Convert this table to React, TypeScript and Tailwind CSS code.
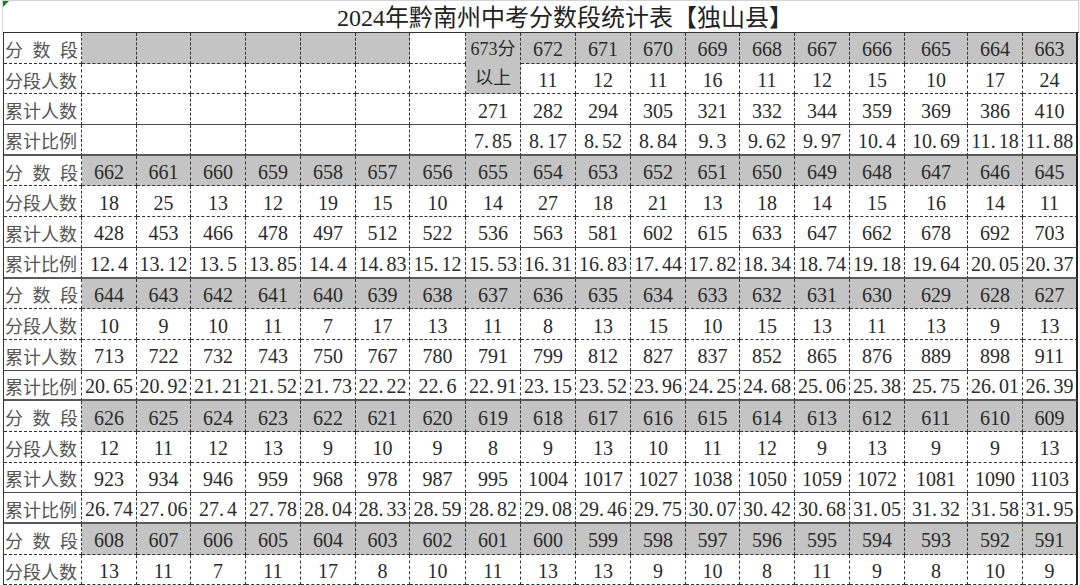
const labels = ['分 数 段', '分段人数', '累计人数', '累计比例'];

type Spec = { t?: string; gray?: boolean; span2?: boolean; skip?: boolean };
type Row = { kind: number; cells: Spec[] };

const split = (s: string) => s.split(' ');

const blocks = [
  {
    scores: split('662 661 660 659 658 657 656 655 654 653 652 651 650 649 648 647 646 645'),
    counts: split('18 25 13 12 19 15 10 14 27 18 21 13 18 14 15 16 14 11'),
    cums: split('428 453 466 478 497 512 522 536 563 581 602 615 633 647 662 678 692 703'),
    ratios: split('12.4 13.12 13.5 13.85 14.4 14.83 15.12 15.53 16.31 16.83 17.44 17.82 18.34 18.74 19.18 19.64 20.05 20.37'),
  },
  {
    scores: split('644 643 642 641 640 639 638 637 636 635 634 633 632 631 630 629 628 627'),
    counts: split('10 9 10 11 7 17 13 11 8 13 15 10 15 13 11 13 9 13'),
    cums: split('713 722 732 743 750 767 780 791 799 812 827 837 852 865 876 889 898 911'),
    ratios: split('20.65 20.92 21.21 21.52 21.73 22.22 22.6 22.91 23.15 23.52 23.96 24.25 24.68 25.06 25.38 25.75 26.01 26.39'),
  },
  {
    scores: split('626 625 624 623 622 621 620 619 618 617 616 615 614 613 612 611 610 609'),
    counts: split('12 11 12 13 9 10 9 8 9 13 10 11 12 9 13 9 9 13'),
    cums: split('923 934 946 959 968 978 987 995 1004 1017 1027 1038 1050 1059 1072 1081 1090 1103'),
    ratios: split('26.74 27.06 27.4 27.78 28.04 28.33 28.59 28.82 29.08 29.46 29.75 30.07 30.42 30.68 31.05 31.32 31.58 31.95'),
  },
];

const empty = (n: number, gray = false): Spec[] => Array.from({ length: n }, () => ({ gray }));

const rows: Row[] = [
  {
    kind: 0,
    cells: [
      ...empty(6, true),
      ...empty(1),
      { t: '673分\n以上', gray: true, span2: true },
      ...split('672 671 670 669 668 667 666 665 664 663').map((t) => ({ t, gray: true })),
    ],
  },
  {
    kind: 1,
    cells: [...empty(7), { skip: true }, ...split('11 12 11 16 11 12 15 10 17 24').map((t) => ({ t }))],
  },
  {
    kind: 2,
    cells: [...empty(7), ...split('271 282 294 305 321 332 344 359 369 386 410').map((t) => ({ t }))],
  },
  {
    kind: 3,
    cells: [...empty(7), ...split('7.85 8.17 8.52 8.84 9.3 9.62 9.97 10.4 10.69 11.18 11.88').map((t) => ({ t }))],
  },
];

blocks.forEach((b) => {
  rows.push({ kind: 0, cells: b.scores.map((t) => ({ t, gray: true })) });
  rows.push({ kind: 1, cells: b.counts.map((t) => ({ t })) });
  rows.push({ kind: 2, cells: b.cums.map((t) => ({ t })) });
  rows.push({ kind: 3, cells: b.ratios.map((t) => ({ t })) });
});

rows.push({ kind: 0, cells: split('608 607 606 605 604 603 602 601 600 599 598 597 596 595 594 593 592 591').map((t) => ({ t, gray: true })) });
rows.push({ kind: 1, cells: split('13 11 7 11 17 8 10 11 13 13 9 10 8 11 9 8 10 9').map((t) => ({ t })) });

function bottom(kind: number) {
  if (kind === 2) return 'border-b [border-bottom-style:solid] border-b-[#4a4a4a]';
  if (kind === 3) return 'border-b-2 [border-bottom-style:solid] border-b-[#5a5a5a]';
  return 'border-b [border-bottom-style:dashed] border-b-[#333]';
}

function right(last: boolean) {
  return last
    ? 'border-r-2 [border-right-style:solid] border-r-[#222]'
    : 'border-r [border-right-style:dashed] border-r-[#333]';
}

// the sheet's font gives the decimal point a wide slot
function Num({ t }: { t?: string }) {
  if (!t || !t.includes('.')) return <>{t}</>;
  const [a, b] = t.split('.');
  return (
    <>
      {a}
      <span className="pr-[3px]">.</span>
      {b}
    </>
  );
}

export default function App() {
  return (
    <div className="w-[1080px] h-[585px] overflow-hidden bg-[#f2f2f2] font-['Liberation_Serif','Noto_Sans_CJK_SC',serif] text-[#2b2b2b]">
      <div className="w-[1079px] h-full bg-white">
        <div className="relative ml-[2px] w-[1077px] h-[32px] border-t border-x border-[#d2d2d2] flex items-center pl-[334px] pt-[2px] text-[24px] text-[#222]">
          <span className="absolute left-0 top-0 w-0 h-0 border-t-[6px] border-r-[6px] border-t-[#1f7a2a] border-r-transparent" />
          2024年黔南州中考分数段统计表【独山县】
        </div>
        <div className="ml-[3px] w-[1076px] border-t border-l border-[#333] grid grid-cols-[78px_55px_54px_55px_55px_55px_54px_56px_55px_55px_55px_55px_54px_55px_55px_55px_63px_55px_55px] auto-rows-[30.7px]">
          {rows.map((r, ri) => [
            <div
              key={`l${ri}`}
              className={`${bottom(r.kind)} ${right(false)} flex items-center pt-[3px] pl-[1px] pr-[3px] text-[18px] text-[#555] font-['Noto_Sans_CJK_SC',sans-serif] ${
                r.kind === 0 ? 'justify-between' : 'justify-start'
              }`}
            >
              {labels[r.kind].split(r.kind === 0 ? ' ' : '').map((ch, i) => (
                <span key={i}>{ch}</span>
              ))}
            </div>,
            ...r.cells.map((c, ci) => {
              if (c.skip) return null;
              const last = ci === r.cells.length - 1;
              if (c.span2) {
                return (
                  <div
                    key={`c${ri}-${ci}`}
                    className={`row-span-2 ${bottom(1)} ${right(false)} bg-[#c4c4c4] flex flex-col items-center justify-center text-[18px] leading-[29px] pt-[2px]`}
                  >
                    {c.t!.split('\n').map((line, i) => (
                      <span key={i}>{line}</span>
                    ))}
                  </div>
                );
              }
              return (
                <div
                  key={`c${ri}-${ci}`}
                  className={`${bottom(r.kind)} ${right(last)} ${
                    c.gray ? 'bg-[#c4c4c4]' : 'bg-white'
                  } flex items-center justify-center pt-[3px] text-[20px] whitespace-nowrap`}
                >
                  <Num t={c.t} />
                </div>
              );
            }),
          ])}
        </div>
      </div>
    </div>
  );
}
